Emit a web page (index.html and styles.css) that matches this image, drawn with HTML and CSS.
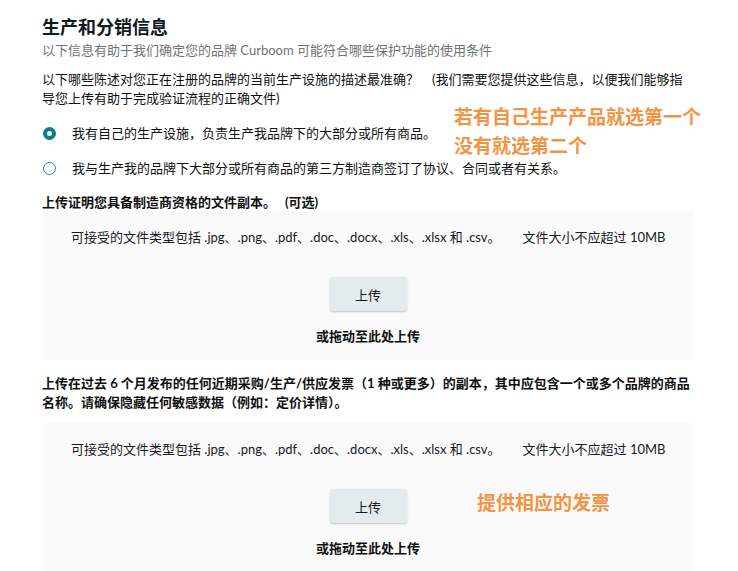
FILE: index.html
```html
<!DOCTYPE html>
<html lang="zh-CN">
<head>
<meta charset="utf-8">
<title>生产和分销信息</title>
<link rel="stylesheet" href="styles.css">
</head>
<body>
<div class="page">
  <h1 class="title">生产和分销信息</h1>
  <p class="subtitle">以下信息有助于我们确定您的品牌 Curboom 可能符合哪些保护功能的使用条件</p>
  <p class="question">以下哪些陈述对您正在注册的品牌的当前生产设施的描述最准确？　(我们需要您提供这些信息，以便我们能够指导您上传有助于完成验证流程的正确文件)</p>
  <div class="options">
    <label class="option"><span class="radio checked"></span><span>我有自己的生产设施，负责生产我品牌下的大部分或所有商品。</span></label>
    <label class="option"><span class="radio"></span><span>我与生产我的品牌下大部分或所有商品的第三方制造商签订了协议、合同或者有关系。</span></label>
  </div>
  <div class="note note-1"><span>若有自己生产产品就选第一个</span><span>没有就选第二个</span></div>

  <h2 class="upload-title">上传证明您具备制造商资格的文件副本。<span class="gap">(可选)</span></h2>
  <div class="dropzone">
    <p class="types">可接受的文件类型包括 .jpg、.png、.pdf、.doc、.docx、.xls、.xlsx 和 .csv。<span class="size">文件大小不应超过 10MB</span></p>
    <button class="btn">上传</button>
    <p class="drag">或拖动至此处上传</p>
  </div>

  <h2 class="upload-title two">上传在过去 6 个月发布的任何近期采购/生产/供应发票（1 种或更多）的副本，其中应包含一个或多个品牌的商品名称。请确保隐藏任何敏感数据（例如：定价详情）。</h2>
  <div class="dropzone second">
    <p class="types">可接受的文件类型包括 .jpg、.png、.pdf、.doc、.docx、.xls、.xlsx 和 .csv。<span class="size">文件大小不应超过 10MB</span></p>
    <button class="btn">上传</button>
    <p class="drag">或拖动至此处上传</p>
    <div class="note note-2"><span>提供相应的发票</span></div>
  </div>
</div>
</body>
</html>
```

FILE: styles.css
```css
html, body {
  margin: 0;
  padding: 0;
  background: #ffffff;
}
body {
  font-family: "Lato", "Noto Sans CJK SC", sans-serif;
  color: #0f1111;
  font-size: 13px;
}
.page {
  position: relative;
  width: 651px;
  padding: 15px 0 0 42px;
}
.title {
  margin: 0;
  font-size: 18px;
  line-height: 24px;
  font-weight: 700;
  color: #0f1a1c;
}
.subtitle {
  margin: 1px 0 0;
  line-height: 20px;
  color: #6f7373;
}
.question {
  margin: 10px 0 0;
  line-height: 19px;
}
.options {
  margin-top: 15px;
  display: flex;
  flex-direction: column;
  gap: 15px;
}
.option {
  display: flex;
  align-items: center;
  height: 20px;
  line-height: 20px;
}
.radio {
  flex: none;
  box-sizing: border-box;
  width: 13px;
  height: 13px;
  border-radius: 50%;
  border: 1.5px solid #1b8a98;
  margin: 0 16px 0 1px;
  background: #fff;
}
.radio.checked {
  border: 4px solid #0b7d8c;
}
.note {
  position: absolute;
  display: flex;
  flex-direction: column;
  gap: 7px;
  color: #f39444;
  font-weight: 700;
  font-size: 19px;
  line-height: 22px;
  white-space: nowrap;
}
.note-1 {
  left: 454px;
  top: 106px;
}
.note-2 {
  left: 434px;
  top: 69px;
}
.upload-title {
  margin: 15px 0 0;
  font-size: 13px;
  line-height: 18px;
  font-weight: 700;
}
.upload-title .gap {
  margin-left: 9px;
}
.upload-title.two {
  margin-top: 14px;
  line-height: 19px;
}
.dropzone {
  position: relative;
  margin-left: 1px;
  background: #fafafa;
  padding: 17px 0 15px 28px;
  display: flex;
  flex-direction: column;
  align-items: center;
}
.dropzone.second {
  margin-top: 11px;
}
.types {
  align-self: flex-start;
  margin: 0;
  line-height: 18px;
  color: #16191f;
}
.size {
  margin-left: 22px;
}
.btn {
  margin: 31px 28px 0 0;
  width: 77px;
  height: 34px;
  border: none;
  border-radius: 3px;
  background: #e3ebed;
  box-shadow: 0 1px 2px rgba(0, 0, 0, 0.22);
  font-family: inherit;
  font-size: 13px;
  color: #16191f;
}
.drag {
  margin: 16px 28px 0 0;
  line-height: 18px;
  font-weight: 700;
}
```
